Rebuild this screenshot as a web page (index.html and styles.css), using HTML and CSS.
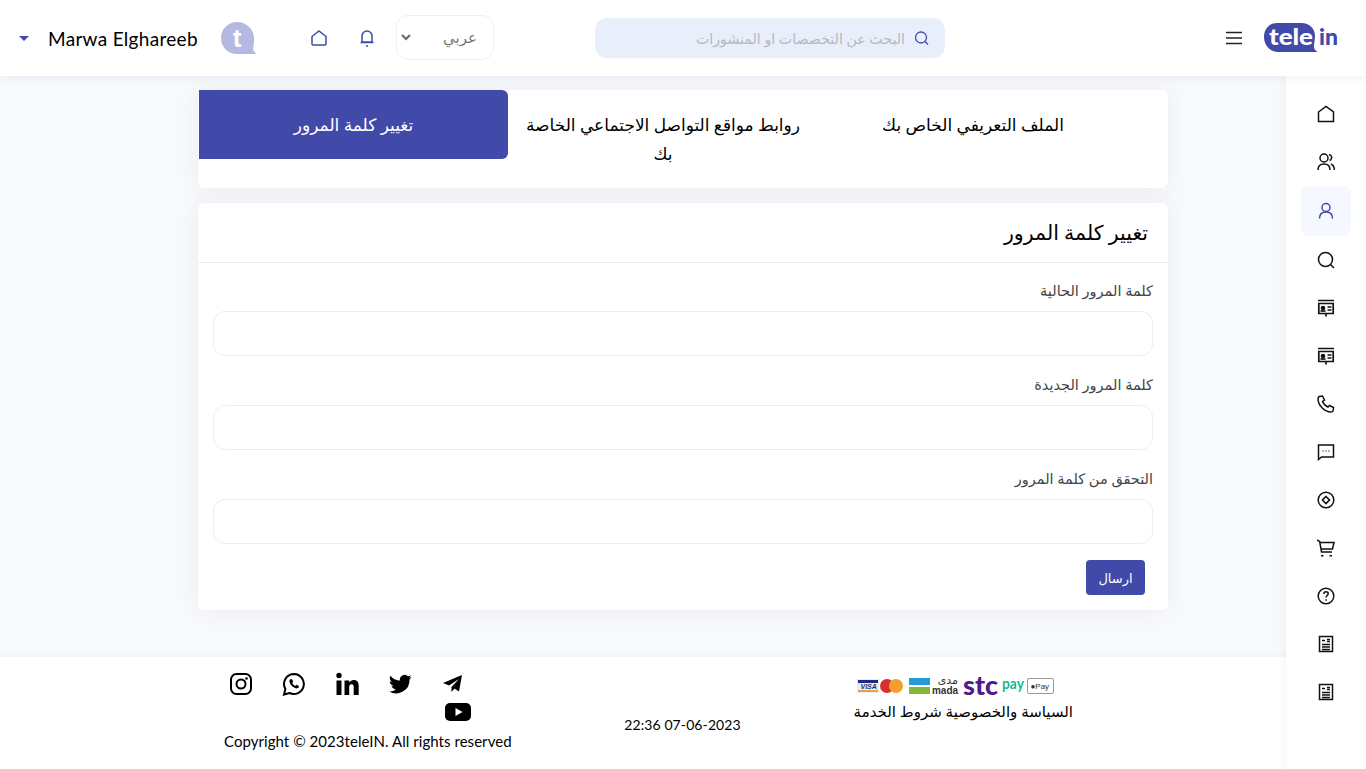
FILE: index.html
```html
<!DOCTYPE html>
<html lang="ar">
<head>
  <title>teleIN</title>
  <meta charset="utf-8" />
  <link rel="stylesheet" href="styles.css">
</head>
<body>

  <header class="topbar">
    <div class="user">
      <span class="caret"></span>
      <span class="user-name">Marwa Elghareeb</span>
      <svg class="avatar" width="37" height="34" viewBox="0 0 37 34">
        <path d="M16 1C7 1 0 8 0 17s7 16 16 16h20c-2-1-4-3-4-6 1-3 1-6 1-10C33 8 25 1 16 1z" fill="#b3b9e2"/>
        <text x="16" y="26" class="avatar-t">t</text>
      </svg>
    </div>

    <div class="tools">
      <svg class="tool-icon" width="18" height="18" viewBox="0 0 18 18"><path d="M2 7.500 9 2l7 5.500V15a1 1 0 0 1-1 1H3a1 1 0 0 1-1-1z"/></svg>
      <svg class="tool-icon bell" width="18" height="20" viewBox="0 0 18 20"><path d="M4 14V8a5 5 0 0 1 10 0v6zM2.500 14.500h13M8 18h2"/></svg>
      <div class="lang">
        <svg width="10" height="7" viewBox="0 0 10 7"><path d="M1 1l4 4 4-4" fill="none" stroke="#666" stroke-width="2"/></svg>
        <span>عربي</span>
      </div>
    </div>

    <div class="search">
      <svg width="17" height="17" viewBox="0 0 17 17"><circle cx="8" cy="7.500" r="5.500" fill="none" stroke="#4149a9" stroke-width="1.300"/><path d="M12 11.500l3 3" stroke="#4149a9" stroke-width="1.300"/></svg>
      <span>البحث عن التخصصات او المنشورات</span>
    </div>

    <div class="brand">
      <svg width="16" height="14" viewBox="0 0 16 14"><path d="M0 1.500h16M0 7h16M0 12.500h16" stroke="#222" stroke-width="1.600"/></svg>
      <svg class="logo" width="76" height="32" viewBox="0 0 76 32">
        <path d="M13 1h24c9 0 14 6 14 13 0 4-1 7-1 10 0 3 1 5 4 6H14C6 30 0 23 0 15S5 1 13 1z" fill="#4149a9"/>
        <text x="5" y="23" class="logo-tele" textLength="44" lengthAdjust="spacingAndGlyphs">tele</text>
        <text x="55" y="23" class="logo-in" textLength="19" lengthAdjust="spacingAndGlyphs">in</text>
      </svg>
    </div>
  </header>

  <div class="page">
    <div class="main">
      <div class="content">
        <ul class="tabs">
          <li class="tab">الملف التعريفي الخاص بك</li>
          <li class="tab">روابط مواقع التواصل الاجتماعي الخاصة بك</li>
          <li class="tab active">تغيير كلمة المرور</li>
        </ul>

        <section class="card">
          <h2 class="card-title">تغيير كلمة المرور</h2>
          <form class="card-body">
            <div class="field">
              <label>كلمة المرور الحالية</label>
              <input type="password">
            </div>
            <div class="field">
              <label>كلمة المرور الجديدة</label>
              <input type="password">
            </div>
            <div class="field">
              <label>التحقق من كلمة المرور</label>
              <input type="password">
            </div>
            <button type="button" class="send">ارسال</button>
          </form>
        </section>
      </div>

      <footer class="footer">
        <div class="foot-left">
          <div class="socials">
            <svg width="26" height="24" viewBox="0 0 24 24"><path d="M21 3 2 11l6 2.500L18 7l-7.500 8v5l3-3.500 4.500 3z" fill="#000"/></svg>
            <svg width="26" height="24" viewBox="0 0 24 24"><path d="M23.500 5c-.8.400-1.700.600-2.600.7 1-.6 1.700-1.500 2-2.500-.9.500-1.900.9-2.900 1.100a4.700 4.700 0 0 0-8 4.300C8.100 8.400 4.700 6.500 2.400 3.700 1.200 5.800 1.800 8.500 3.900 9.900c-.8 0-1.500-.2-2.100-.6 0 2.300 1.600 4.300 3.800 4.700-.7.200-1.400.2-2.100.1.600 1.900 2.300 3.200 4.400 3.300A9.500 9.500 0 0 1 .9 19.300a13.400 13.400 0 0 0 20.600-11.900c.9-.6 1.500-1.400 2-2.400z" fill="#000"/></svg>
            <svg width="26" height="24" viewBox="0 0 24 24"><circle cx="4" cy="3.500" r="2.700" fill="#000"/><path d="M1.500 8.500h5V23h-5zM9.500 8.500h4.700v2c1-1.500 2.500-2.400 4.500-2.400 3.700 0 5 2.300 5 6V23h-5v-7.700c0-1.800-.6-3-2.200-3-1.700 0-2.300 1.300-2.300 3V23h-4.700z" fill="#000"/></svg>
            <svg width="26" height="24" viewBox="0 0 24 24"><path d="M12 2a10 10 0 0 0-8.600 15L2 22.500 7.500 21A10 10 0 1 0 12 2z" fill="none" stroke="#000" stroke-width="2"/><path d="M8.500 7c-1 .8-1.300 2-.9 3.300.9 2.800 3.200 5 6 6 1.300.4 2.600 0 3.300-1l-.3-1.500-2.300-1-1.200 1.100c-1.200-.6-2.300-1.700-2.900-2.900l1-1.200-1-2.400z" fill="#000"/></svg>
            <svg width="26" height="24" viewBox="0 0 24 24"><rect x="2" y="2" width="20" height="20" rx="5.500" fill="none" stroke="#000" stroke-width="2"/><circle cx="12" cy="12" r="4.500" fill="none" stroke="#000" stroke-width="2"/><circle cx="17.500" cy="6.500" r="1.300" fill="#000"/></svg>
            <svg class="yt" width="26" height="18" viewBox="0 0 26 18"><rect width="26" height="18" rx="5" fill="#000"/><path d="M10.500 5l7 4-7 4z" fill="#fff"/></svg>
          </div>
          <p class="copy">Copyright © 2023teleIN. All rights reserved</p>
        </div>

        <div class="foot-date">22:36 07-06-2023</div>

        <div class="foot-right">
          <svg class="pay" width="200" height="40" viewBox="0 -8 200 40">
            <rect x="0" y="7" width="22" height="14" fill="#e9ebf3"/>
            <rect x="1" y="8" width="20" height="3" fill="#1b2a7a"/>
            <rect x="1" y="18" width="20" height="2" fill="#e8a33d"/>
            <text x="3.500" y="17" class="pay-visa">VISA</text>
            <circle cx="30" cy="14" r="7" fill="#d9302c"/>
            <circle cx="39" cy="14" r="7" fill="#f2a02c"/>
            <rect x="52" y="6" width="21" height="7" fill="#259bd6"/>
            <rect x="52" y="15" width="21" height="7" fill="#84b740"/>
            <text x="101" y="12" class="pay-mada pay-mada-ar">مدى</text>
            <text x="75" y="22" class="pay-mada" textLength="26" lengthAdjust="spacingAndGlyphs">mada</text>
            <text x="106" y="23" class="pay-stc" textLength="35" lengthAdjust="spacingAndGlyphs">stc</text>
            <text x="145" y="17" class="pay-word" textLength="22" lengthAdjust="spacingAndGlyphs">pay</text>
            <rect x="170.500" y="6.500" width="26" height="15" rx="1.500" fill="#fff" stroke="#999"/>
            <text x="173.500" y="17" class="pay-apple">●Pay</text>
          </svg>
          <p class="foot-links">السياسة والخصوصية شروط الخدمة</p>
        </div>
      </footer>
    </div>

    <aside class="side">
      <a class="side-item"><svg viewBox="0 0 18 18"><path d="M1.500 7 9 1.500 16.500 7v9.500h-15z"/></svg></a>
      <a class="side-item"><svg viewBox="0 0 18 18"><circle cx="7" cy="5" r="4"/><path d="M1 17c0-4 2.500-6 6-6s6 2 6 6M12 1.500c2 .5 3 2 2.500 3.800-.2 1-1 1.800-2 2.200M14 11c2 .8 3.400 3 3.400 6"/></svg></a>
      <a class="side-item active"><svg viewBox="0 0 18 18"><circle cx="9" cy="5.500" r="4"/><path d="M2.500 16.500c0-4 2.500-6.500 6.500-6.500s6.500 2.500 6.500 6.500"/></svg></a>
      <a class="side-item"><svg viewBox="0 0 18 18"><circle cx="8.500" cy="8.500" r="7"/><path d="M13.500 13.500l3.500 3.500"/></svg></a>
      <a class="side-item"><svg class="board" viewBox="0 0 18 18"><path d="M1 1.500h16M1.800 4.500h14.400v10H1.800zM9 14.500v3M10.500 8h4M10.500 11h4"/><circle cx="6" cy="9" r="1.500" fill="#111"/><path d="M3.500 12h5"/></svg></a>
      <a class="side-item"><svg class="board" viewBox="0 0 18 18"><path d="M1 1.500h16M1.800 4.500h14.400v10H1.800zM9 14.500v3M10.500 8h4M10.500 11h4"/><circle cx="6" cy="9" r="1.500" fill="#111"/><path d="M3.500 12h5"/></svg></a>
      <a class="side-item"><svg viewBox="0 0 18 18"><path d="M2 1.500 5.500 1 7.500 5 5.500 6.500c1 2.500 3 4.500 5.500 5.500L12.500 10.500l4 2-.5 3.500c-.2.500-1 1-2 1C7.500 17 1 10 1 4c0-1 .5-2 1-2.500z"/></svg></a>
      <a class="side-item"><svg viewBox="0 0 18 18"><path d="M1.500 2h15v12H4.500l-3 2.500z"/><path d="M5.500 8h1.200M8.400 8h1.200M11.300 8h1.200" stroke-width="1.200"/></svg></a>
      <a class="side-item"><svg viewBox="0 0 18 18"><circle cx="9" cy="9" r="7.800"/><path d="M9 5.500 12.500 9 9 12.500 5.500 9z" stroke-width="1.600"/></svg></a>
      <a class="side-item"><svg viewBox="0 0 18 18"><path d="M0 1l2.700 1.500L4.500 13h10.500M2.800 3.500H17l-1.500 6.500H4M4 16.800h2.500M12.500 16.800H15"/></svg></a>
      <a class="side-item"><svg viewBox="0 0 18 18"><circle cx="9" cy="9" r="7.800"/><path d="M6.800 7c0-1.300 1-2.200 2.200-2.200s2.200.9 2.200 2c0 1.700-2.200 1.800-2.200 3.700M9 12.200v1.500"/></svg></a>
      <a class="side-item"><svg viewBox="0 0 18 18"><path d="M2.500 1.500h13v15h-13zM5 9.500h8M5 12h8M5 14.500h8"/><path d="M5 5.500h3M10 4.500h3M10 6.500h3" stroke-width="1.500"/></svg></a>
      <a class="side-item"><svg viewBox="0 0 18 18"><path d="M2.500 1.500h13v15h-13zM5 9.500h8M5 12h8M5 14.500h8"/><path d="M5 5.500h3M10 4.500h3M10 6.500h3" stroke-width="1.500"/></svg></a>
    </aside>
  </div>

</body>
</html>
```

FILE: styles.css
```css
html, body {
  height: 100%;
  margin: 0;
  overflow: hidden;
}

body {
  font-family: "Lato", "DejaVu Sans", sans-serif;
  background-color: #f8f9fb;
  color: #000;
  display: flex;
  flex-direction: column;
}

.topbar {
  height: 76px;
  flex: none;
  background-color: #fff;
  box-shadow: 0 2px 8px rgba(65, 73, 169, 0.08);
  display: flex;
  align-items: center;
  position: relative;
  padding-left: 19px;
}

.user {
  display: flex;
  align-items: center;
  width: 291px;
}

.caret {
  width: 0;
  height: 0;
  border-left: 5px solid transparent;
  border-right: 5px solid transparent;
  border-top: 5px solid #4149a9;
}

.user-name {
  margin-left: 19px;
  width: 150px;
  font-size: 19px;
  letter-spacing: 0.3px;
  white-space: nowrap;
}

.tools {
  display: flex;
  align-items: center;
  width: 185px;
}

.tool-icon {
  fill: none;
  stroke: #4149a9;
  stroke-width: 1.500;
}

.bell {
  margin-left: 30px;
  margin-right: 20px;
}

.lang {
  width: 98px;
  height: 45px;
  margin-top: -1px;
  box-sizing: border-box;
  border: 1px solid #eef0f4;
  border-radius: 12px;
  padding: 0 16px 0 4px;
  display: flex;
  align-items: center;
  justify-content: space-between;
  font-size: 15px;
  color: #777;
}

.search {
  margin-left: 100px;
  width: 350px;
  height: 40px;
  box-sizing: border-box;
  background-color: #e8effa;
  border-radius: 12px;
  padding-right: 15px;
  display: flex;
  flex-direction: row-reverse;
  align-items: center;
  gap: 8px;
  font-size: 14.200px;
  color: #b5b8bf;
}

.brand {
  margin-left: 281px;
  display: flex;
  align-items: center;
  gap: 22px;
}

.logo-tele {
  font-family: "Lato", sans-serif;
  font-weight: 900;
  font-size: 23px;
  fill: #fff;
}

.logo-in {
  font-family: "Lato", sans-serif;
  font-weight: 900;
  font-size: 23px;
  fill: #4149a9;
}

.avatar {
  margin-left: 23px;
}

.avatar-t {
  font-family: "Liberation Sans", sans-serif;
  font-weight: 700;
  font-size: 26px;
  fill: #fff;
  text-anchor: middle;
}

.page {
  flex: 1;
  display: flex;
  min-height: 0;
}

.main {
  flex: 1;
  display: flex;
  flex-direction: column;
  min-width: 0;
}

.content {
  flex: 1;
  width: 970px;
  margin-left: 198px;
  padding-top: 14px;
  direction: rtl;
}

.tabs {
  list-style: none;
  margin: 0;
  padding: 0 40px 0 0;
  display: flex;
  align-items: flex-start;
  height: 98px;
  background-color: #fff;
  border-radius: 6px;
  box-shadow: 0 0 20px rgba(65, 73, 120, 0.07);
}

.tab {
  width: 310px;
  box-sizing: border-box;
  padding: 20px 15px;
  font-size: 17px;
  line-height: 29px;
  text-align: center;
}

.tab.active {
  width: 309px;
  background-color: #4149a9;
  color: #fff;
  border-radius: 0 6px 6px 0;
}

.card {
  margin-top: 15px;
  background-color: #fff;
  border-radius: 6px;
  box-shadow: 0 0 20px rgba(65, 73, 120, 0.07);
}

.card-title {
  margin: 0;
  height: 59px;
  padding: 0 20px;
  border-bottom: 1px solid #ebedf0;
  font-size: 20.500px;
  font-weight: 400;
  line-height: 59px;
}

.card-body {
  padding: 16px 15px 15px;
}

.field {
  margin-bottom: 17px;
}

.field:nth-child(3) {
  margin-bottom: 16px;
}

.field label {
  display: block;
  height: 24px;
  margin-bottom: 8px;
  font-size: 14.500px;
  line-height: 24px;
  color: #444;
}

.field input {
  display: block;
  width: 100%;
  height: 45px;
  box-sizing: border-box;
  border: 1px solid #ebedf0;
  border-radius: 12px;
  background-color: #fff;
}

.send {
  display: block;
  margin-right: 8px;
  width: 59px;
  height: 35px;
  border: none;
  border-radius: 4px;
  background-color: #4149a9;
  color: #fff;
  font-family: inherit;
  font-size: 13px;
}

.footer {
  height: 112px;
  flex: none;
  background-color: #fff;
  box-shadow: 0 -1px 6px rgba(65, 73, 120, 0.06);
  display: flex;
  padding-left: 198px;
  font-size: 14px;
}

.foot-left {
  width: 323px;
  box-sizing: border-box;
  padding: 15px 0 0 26px;
}

.socials {
  direction: rtl;
  width: 242px;
  display: flex;
  flex-wrap: wrap;
  gap: 7px 27px;
}

.socials svg {
  display: block;
}

.socials .yt {
  margin-right: -5px;
}

.copy {
  margin: 11px 0 0;
  font-size: 15px;
  letter-spacing: 0.05px;
  white-space: nowrap;
}

.foot-date {
  width: 323px;
  text-align: center;
  padding-top: 59px;
  font-size: 14px;
  letter-spacing: 0.1px;
}

.foot-right {
  padding: 7px 0 0 13px;
}

.pay {
  display: block;
  margin-bottom: -2px;
}

.pay-visa {
  font-family: "Liberation Sans", sans-serif;
  font-size: 7px;
  font-weight: 700;
  font-style: italic;
  fill: #1b2a7a;
}

.pay-mada {
  font-family: "Liberation Sans", "DejaVu Sans", sans-serif;
  font-size: 11px;
  font-weight: 700;
  fill: #333;
}

.pay-mada-ar {
  text-anchor: end;
  font-weight: 400;
}

.pay-stc {
  font-family: "Lato", sans-serif;
  font-size: 26px;
  font-weight: 900;
  fill: #4f1a8c;
}

.pay-word {
  font-family: "Lato", sans-serif;
  font-size: 15px;
  font-weight: 700;
  fill: #14b98f;
}

.pay-apple {
  font-family: "Liberation Sans", sans-serif;
  font-size: 8px;
  fill: #333;
}

.foot-links {
  margin: 0 0 0 -2px;
  direction: rtl;
  font-size: 15px;
  width: 218px;
  white-space: nowrap;
}

.side {
  width: 80px;
  flex: none;
  padding-top: 14px;
  background-color: #fff;
  box-shadow: -2px 0 8px rgba(65, 73, 120, 0.05);
  display: flex;
  flex-direction: column;
  align-items: center;
}

.side-item {
  width: 50px;
  height: 48px;
  display: flex;
  align-items: center;
  justify-content: center;
  border-radius: 8px;
}

.side-item svg {
  width: 18px;
  height: 18px;
  fill: none;
  stroke: #111;
  stroke-width: 1.500;
}

.side-item svg.board {
  stroke-width: 1.700;
}

.side-item.active {
  height: 50px;
  background-color: #f5f8fe;
}

.side-item.active svg {
  stroke: #4149a9;
}
```
